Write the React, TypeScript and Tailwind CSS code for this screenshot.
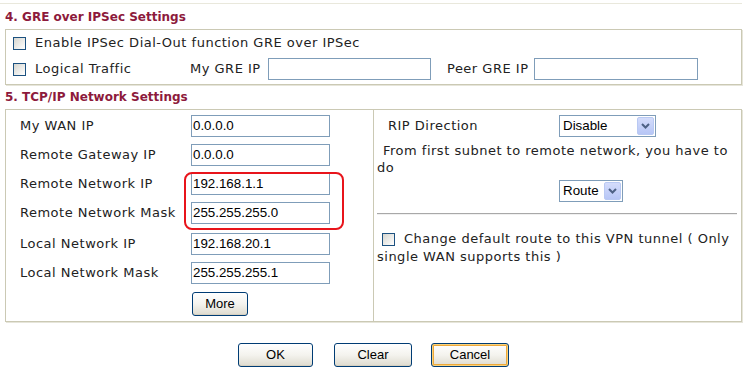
import React from "react";

function Check() {
  return (
    <span className="inline-block w-[13px] h-[13px] shrink-0 border border-[#1c5180] bg-linear-to-br from-[#d6d6d0] to-white" />
  );
}

function TextInput({ value, w }: { value?: string; w: string }) {
  return (
    <div
      className={`${w} h-[22px] shrink-0 border border-[#7f9db9] bg-white flex items-center pl-[1px] font-['Liberation_Sans',Arial,sans-serif] text-[13.33px] tracking-normal text-black`}
    >
      {value}
    </div>
  );
}

function Select({ value, w }: { value: string; w: string }) {
  return (
    <div
      className={`${w} h-[22px] border border-[#7f9db9] bg-white flex items-center justify-between pl-[3px] pr-[1px] font-['Liberation_Sans',Arial,sans-serif] text-[13.33px] tracking-normal text-black`}
    >
      <span>{value}</span>
      <span className="w-[17px] h-[18px] rounded-[2px] border border-[#b9c9f3] bg-linear-to-b from-[#d4dcfb] to-[#b7c6f6] flex items-center justify-center">
        <svg width="9" height="6" viewBox="0 0 9 6">
          <path d="M1 1 L4.5 4.5 L8 1" fill="none" stroke="#4d6185" strokeWidth="2" />
        </svg>
      </span>
    </div>
  );
}

function Btn({ label, w, focus }: { label: string; w: string; focus?: boolean }) {
  return (
    <div
      className={`${w} h-[24px] rounded-[3px] border border-[#003c74] bg-linear-to-b from-white via-[#f4f3ee] to-[#dedbcf] flex items-center justify-center font-['Liberation_Sans',Arial,sans-serif] text-[13px] tracking-normal text-black ${
        focus ? "shadow-[inset_0_0_0_1px_#f9d27e,inset_0_0_0_2px_#eda93a]" : "shadow-[inset_0_-1px_0_#d6d0c0]"
      }`}
    >
      {label}
    </div>
  );
}

export default function App() {
  const leftRows: [string, string, string][] = [
    ["My WAN IP", "0.0.0.0", ""],
    ["Remote Gateway IP", "0.0.0.0", ""],
    ["Remote Network IP", "192.168.1.1", ""],
    ["Remote Network Mask", "255.255.255.0", ""],
    ["Local Network IP", "192.168.20.1", "mt-[2px]"],
    ["Local Network Mask", "255.255.255.1", ""],
  ];
  return (
    <div className="w-[747px] h-[373px] bg-white overflow-hidden font-['DejaVu_Sans',Verdana,sans-serif] text-[13px] tracking-[0.5px] text-[#222]">
      <div className="w-[742px] h-[4px] border-b border-[#e9e8dc]" />
      <div className="h-[25px] flex items-center pl-[5px] font-bold text-[12px] tracking-normal text-[#8d1a3c]">
        4. GRE over IPSec Settings
      </div>
      <div className="ml-[5px] w-[737px] h-[56px] border border-[#cbc9b4] shadow-[1px_1px_0_#e6e5da] flex flex-col pl-[7px] pt-[1px]">
        <div className="h-[24px] flex items-center">
          <Check />
          <span className="ml-[9px]">Enable IPSec Dial-Out function GRE over IPSec</span>
        </div>
        <div className="h-[22px] mt-[3px] flex items-center">
          <Check />
          <span className="ml-[9px] w-[155px]">Logical Traffic</span>
          <span className="w-[78px]">My GRE IP</span>
          <TextInput w="w-[163px]" />
          <span className="ml-[16px] w-[87px]">Peer GRE IP</span>
          <TextInput w="w-[164px]" />
        </div>
      </div>
      <div className="h-[24px] flex items-center pl-[5px] font-bold text-[12px] tracking-normal text-[#8d1a3c]">
        5. TCP/IP Network Settings
      </div>
      <div className="relative ml-[5px] w-[737px] h-[213px] border border-[#cbc9b4] shadow-[1px_1px_0_#e6e5da] flex">
        <div className="w-[368px] border-r border-[#cbc9b4] pt-[5px] pl-[14px] flex flex-col gap-[7px]">
          {leftRows.map(([label, value, extra]) => (
            <div key={label} className={`flex items-center h-[22px] ${extra}`}>
              <span className="w-[171px] whitespace-nowrap">{label}</span>
              <TextInput w="w-[139px]" value={value} />
            </div>
          ))}
          <div className="flex mt-[1px]">
            <span className="w-[172px]" />
            <Btn label="More" w="w-[56px] h-[23px]" />
          </div>
        </div>
        <div className="flex-1 pt-[5px] pl-[3px] pr-[4px] flex flex-col">
          <div className="flex items-center h-[22px] pl-[11px]">
            <span className="w-[171px]">RIP Direction</span>
            <Select value="Disable" w="w-[97px]" />
          </div>
          <div className="mt-[5px] leading-[17px] whitespace-nowrap">
            <div className="pl-[6px]">From first subnet to remote network, you have to</div>
            <div>do</div>
          </div>
          <div className="mt-[4px] pl-[182px]">
            <Select value="Route" w="w-[64px]" />
          </div>
          <div className="mt-[11px] border-t border-[#a8a8a8] border-b border-b-[#f0f0f0]" />
          <div className="mt-[15px] leading-[18px] whitespace-nowrap">
            <div className="flex items-center pl-[5px]">
              <Check />
              <span className="ml-[9px]">Change default route to this VPN tunnel ( Only</span>
            </div>
            <div>single WAN supports this )</div>
          </div>
        </div>
        <div className="absolute left-[178px] top-[62px] w-[160px] h-[58px] border-2 border-[#e8141b] rounded-[8px]" />
      </div>
      <div className="mt-[21px] flex justify-center">
        <Btn label="OK" w="w-[75px]" />
        <div className="w-[21px]" />
        <Btn label="Clear" w="w-[78px]" />
        <div className="w-[19px]" />
        <Btn label="Cancel" w="w-[78px]" focus />
      </div>
    </div>
  );
}
